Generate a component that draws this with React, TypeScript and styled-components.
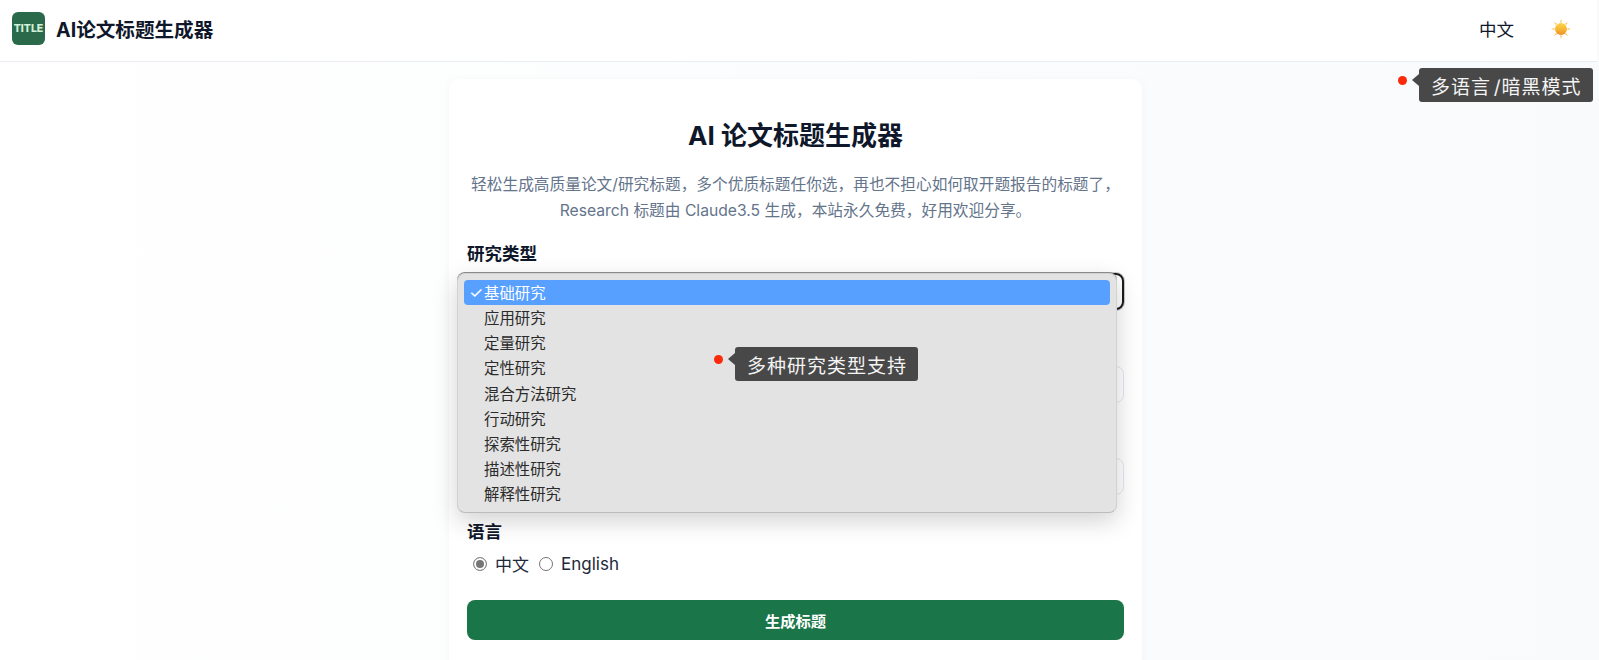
import React from "react";
import styled, { createGlobalStyle } from "styled-components";

const GlobalStyle = createGlobalStyle`
  html, body {
    margin: 0;
    height: 660px;
    overflow: hidden;
    background: #f8fafc;
    font-family: "Inter", "Noto Sans CJK SC", sans-serif;
  }
`;

const researchTypes = ["基础研究", "应用研究", "定量研究", "定性研究", "混合方法研究", "行动研究", "探索性研究", "描述性研究", "解释性研究"];

const App = () => {
  return (
    <Page>
      <GlobalStyle />
      <Header>
        <Brand>
          <Logo>TITLE</Logo>
          <BrandName>AI论文标题生成器</BrandName>
        </Brand>
        <HeaderActions>
          <LangButton>中文</LangButton>
          <ThemeIcon />
        </HeaderActions>
      </Header>
      <Callout top={68} left={1419}>多语言{"\u200A"}/暗黑模式</Callout>
      <Main>
        <Card>
          <Title>AI 论文标题生成器</Title>
          <Intro>
            轻松生成高质量论文/研究标题，多个优质标题任你选，再也不担心如何取开题报告的标题了，
            <br />
            Research 标题由 Claude3.5 生成，本站永久免费，好用欢迎分享。
          </Intro>
          <Field>
            <Label>研究类型</Label>
            <SelectBox />
            <Dropdown>
              {researchTypes.map((item, i) => (
                <Option key={item} active={i === 0}>
                  <Tick>{i === 0 ? "✓" : ""}</Tick>
                  {item}
                </Option>
              ))}
              <Callout top={73} left={277}>多种研究类型支持</Callout>
            </Dropdown>
          </Field>
          <Field>
            <LabelGap />
            <InputBox />
          </Field>
          <Field>
            <LabelGap />
            <InputBox />
          </Field>
          <LastField>
            <Label>语言</Label>
            <RadioRow>
              <RadioItem>
                <Radio checked />中文
              </RadioItem>
              <RadioItem>
                <Radio />English
              </RadioItem>
            </RadioRow>
          </LastField>
          <Submit>生成标题</Submit>
        </Card>
      </Main>
    </Page>
  );
};

const ThemeIcon = () => (
  <svg width="20" height="20" viewBox="0 0 20 20">
    <defs>
      <linearGradient id="sun" x1="0" y1="0" x2="0" y2="1">
        <stop offset="0" stopColor="#fcd64c" />
        <stop offset="0.55" stopColor="#f8b534" />
        <stop offset="1" stopColor="#ef8f2a" />
      </linearGradient>
    </defs>
    <path
      fill="#f9c766"
      d="M10 0l1 3.4H9zM10 20l-1-3.4h2zM0 10l3.4-1v2zM20 10l-3.4 1V9zM3 3l3 1.7-1.3 1.3zM17 17l-3-1.7 1.3-1.3zM17 3l-1.7 3-1.3-1.3zM3 17l1.7-3 1.3 1.3z"
    />
    <circle cx="10" cy="10" r="6" fill="url(#sun)" />
  </svg>
);

export default App;

const Page = styled.div`
  position: relative;
  height: 660px;
  overflow: hidden;
  background: linear-gradient(90deg, #ffffff 0%, #f8fafc 100%);
`;

const Header = styled.header`
  box-sizing: border-box;
  height: 62px;
  margin-right: 2px;
  padding: 0 12px 4px;
  display: flex;
  align-items: center;
  justify-content: space-between;
  background: #fff;
  border-bottom: 1px solid #e9edf3;
`;

const Brand = styled.div`
  display: flex;
  align-items: center;
  gap: 11px;
`;

const Logo = styled.div`
  width: 33px;
  height: 33px;
  border-radius: 6px;
  background: #2a6a4b;
  color: #d3f0da;
  font: 800 10.5px/33px "Inter", sans-serif;
  text-align: center;
`;

const BrandName = styled.div`
  font-size: 19.6px;
  font-weight: 700;
  color: #0f172a;
`;

const HeaderActions = styled.div`
  display: flex;
  align-items: center;
  gap: 37px;
  padding-right: 14px;
`;

const LangButton = styled.span`
  font-size: 17.5px;
  color: #0f172a;
`;

const Callout = styled.div<{ top: number; left: number }>`
  position: absolute;
  top: ${(p) => p.top}px;
  left: ${(p) => p.left}px;
  z-index: 5;
  height: 34px;
  padding: 0 11px 0 12px;
  display: flex;
  align-items: center;
  font-size: 19px;
  letter-spacing: 1px;
  white-space: nowrap;
  color: #f4f4f4;
  background: #484848;
  border-radius: 3px;
  &::before {
    content: "";
    position: absolute;
    left: -7px;
    top: 6px;
    border-style: solid;
    border-width: 6px 7px 6px 0;
    border-color: transparent #484848 transparent transparent;
  }
  &::after {
    content: "";
    position: absolute;
    left: -21px;
    top: 7.5px;
    width: 9px;
    height: 9px;
    border-radius: 50%;
    background: #fa2a0a;
  }
`;

const Main = styled.main`
  display: flex;
  justify-content: center;
  padding: 17px 8px 0 0;
`;

const Card = styled.section`
  box-sizing: border-box;
  width: 693px;
  height: 620px;
  padding: 40px 18px 0;
  background: #fff;
  border-radius: 10px;
  box-shadow: 0 2px 10px rgba(15, 23, 42, 0.04);
`;

const Title = styled.h1`
  margin: 0 0 19px;
  text-align: center;
  font-size: 26px;
  line-height: 34px;
  font-weight: 700;
  color: #0f172a;
`;

const Intro = styled.p`
  margin: 0 0 18px;
  text-align: center;
  font-size: 15.7px;
  line-height: 25.6px;
  white-space: nowrap;
  color: #64748b;
`;

const Field = styled.div`
  position: relative;
  margin-bottom: 23.5px;
`;

const LastField = styled(Field)`
  margin-bottom: 23px;
`;

const Label = styled.div`
  font-size: 17.5px;
  line-height: 26px;
  font-weight: 600;
  color: #0f172a;
  margin-bottom: 6px;
`;

const LabelGap = styled.div`
  height: 32px;
`;

const SelectBox = styled.div`
  box-sizing: border-box;
  height: 37px;
  border: 2px solid #1b1b1f;
  border-radius: 8px;
  box-shadow: 0 0 0 1px #c8c8c8;
`;

const Dropdown = styled.div`
  position: absolute;
  z-index: 3;
  left: -10px;
  top: 32px;
  box-sizing: border-box;
  width: 660px;
  height: 240px;
  padding: 6px 6px 0;
  background: #e3e3e3;
  border: 1px solid #d2d2d2;
  border-bottom-color: #bcbcbc;
  border-radius: 8px;
  box-shadow: 0 -1px 0 #8a8a8a, 0 8px 24px rgba(0, 0, 0, 0.18);
`;

const Option = styled.div<{ active?: boolean }>`
  box-sizing: border-box;
  display: flex;
  align-items: center;
  height: 25.2px;
  padding-bottom: 2px;
  font-size: 15.4px;
  border-radius: 4px;
  color: ${(p) => (p.active ? "#fff" : "#2b2b2b")};
  background: ${(p) => (p.active ? "#57a0ff" : "transparent")};
`;

const Tick = styled.span`
  width: 20px;
  padding-left: 5px;
  box-sizing: border-box;
  font-size: 16px;
  font-weight: 400;
`;

const InputBox = styled.div`
  box-sizing: border-box;
  height: 37px;
  border: 1px solid #e2e8f0;
  border-radius: 8px;
`;

const RadioRow = styled.div`
  display: flex;
  height: 26px;
  gap: 10px;
  padding-left: 6px;
`;

const RadioItem = styled.label`
  display: flex;
  align-items: center;
  gap: 8px;
  font-size: 17px;
  color: #1e293b;
`;

const Radio = styled.span<{ checked?: boolean }>`
  box-sizing: border-box;
  width: 14px;
  height: 14px;
  border-radius: 50%;
  border: 1px solid ${(p) => (p.checked ? "#8a8a8a" : "#767676")};
  background: ${(p) => (p.checked ? "#767676" : "#fff")};
  box-shadow: ${(p) => (p.checked ? "inset 0 0 0 2px #fff" : "none")};
`;

const Submit = styled.button`
  display: block;
  width: 100%;
  height: 40px;
  border: 0;
  border-radius: 8px;
  background: #1a7548;
  color: #fff;
  font: 600 15.3px "Inter", "Noto Sans CJK SC", sans-serif;
`;
